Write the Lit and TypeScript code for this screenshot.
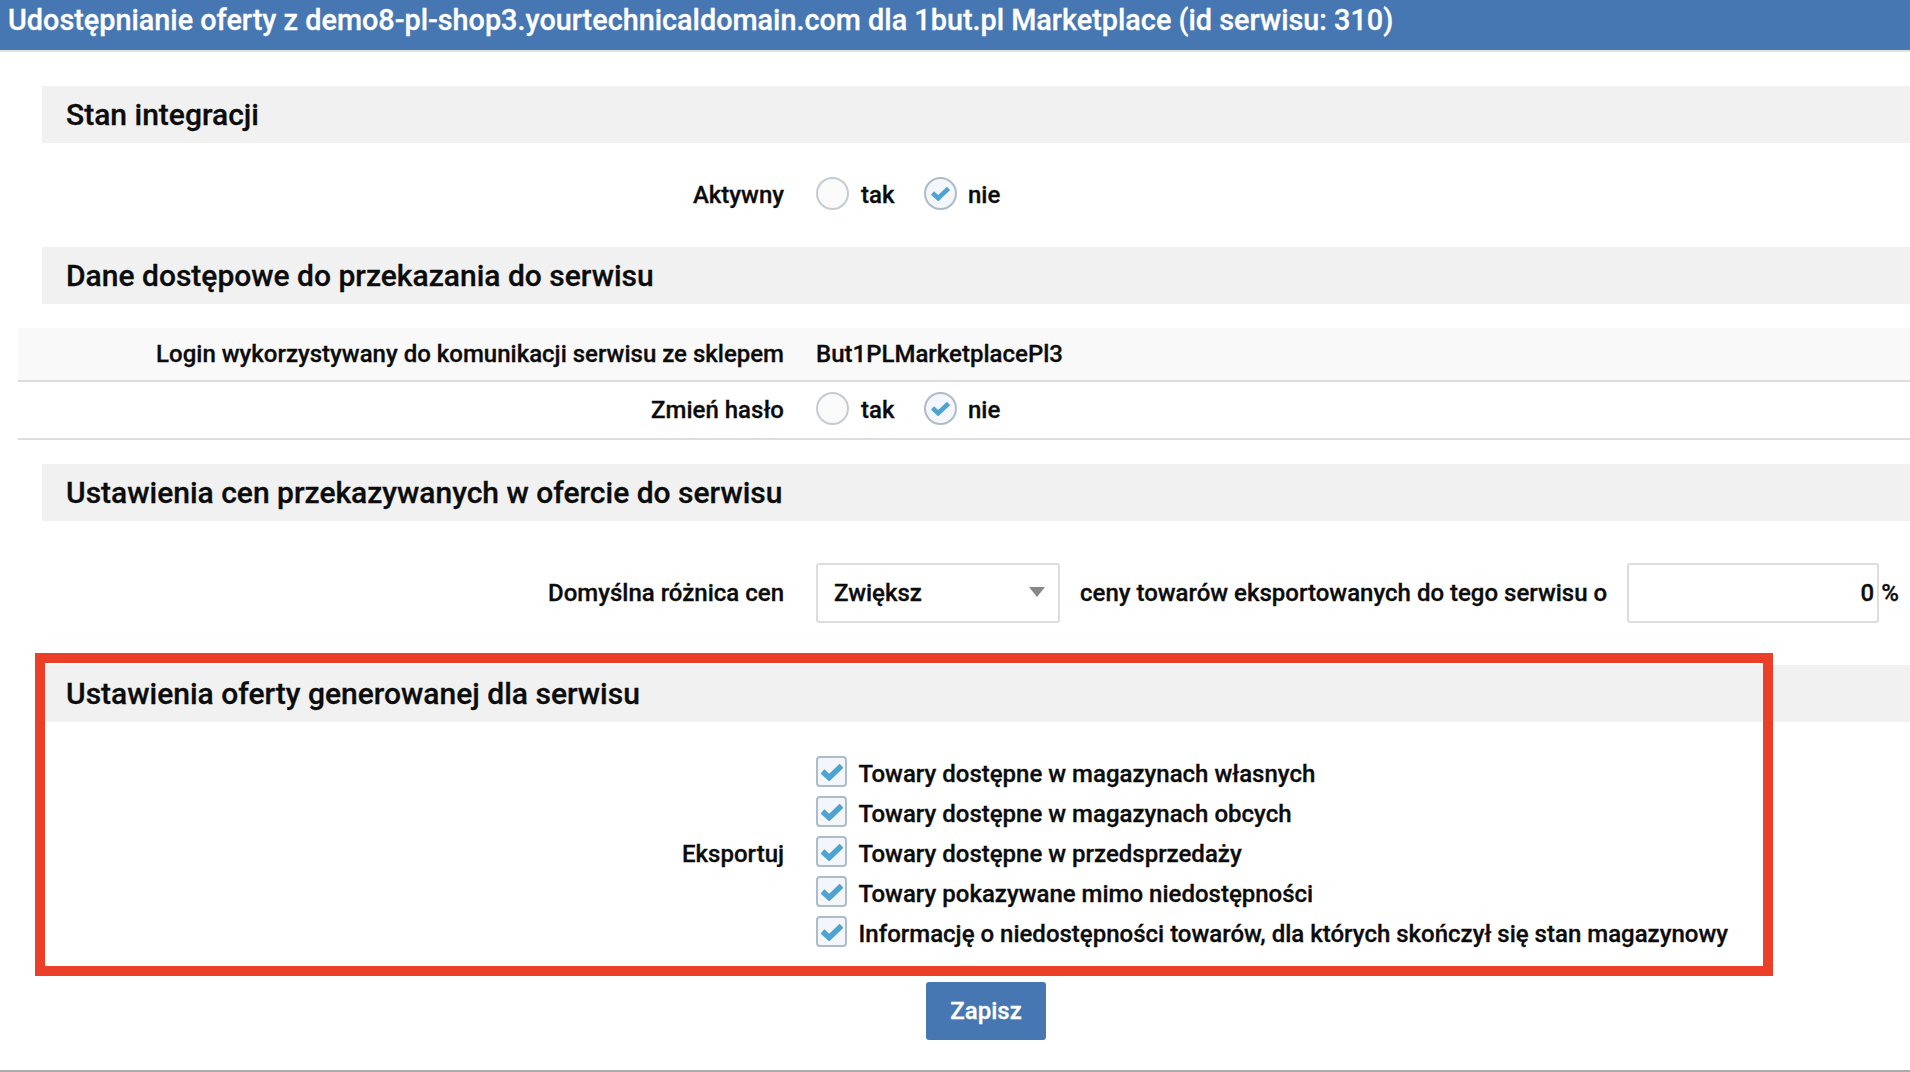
import { LitElement, html, css } from "lit";
import { customElement } from "lit/decorators.js";

const check = html`<svg class="tick" viewBox="0 0 22 18"><path d="M1.4 8.4 L8.2 14.6 L20.6 2.8" fill="none" stroke="#4fa3d1" stroke-width="5.6"/></svg>`;

@customElement("app-root")
export class AppRoot extends LitElement {
  static styles = css`
    :host { display: block; position: relative; height: 1072px; overflow: hidden; background: #fff;
      font-family: Roboto, "Liberation Sans", sans-serif; font-weight: 500; color: #0c0c0c; font-size: 24px;
      -webkit-text-stroke: 0.3px currentColor; }
    .top { height: 50px; background: #4777b2; border-bottom: 2px solid #dfe3df; color: #fff; font-size: 28.8px;
      line-height: 40px; padding-left: 8px; white-space: nowrap; }
    .sec { height: 57px; margin-left: 42px; background: #f1f1f1; padding-left: 24px; font-size: 30px; line-height: 58px; }
    .s1 { margin-top: 34px; }
    .row { display: grid; grid-template-columns: 784px 1fr; column-gap: 32px; align-items: center; }
    .lab { text-align: right; }
    .val { display: flex; align-items: center; }
    .r-top { height: 104px; }
    .table { margin: 24px 0 24px 18px; }
    .table .row { grid-template-columns: 766px 1fr; border-bottom: 2px solid #ddd; }
    .login { height: 52px; background: #f9f9f9; }
    .pass { height: 56px; }
    .price { height: 144px; }
    .radio { box-sizing: border-box; width: 33px; height: 33px; border-radius: 50%; border: 2px solid #c4ccd2; background: #fafafa;
      display: flex; align-items: center; justify-content: center; flex: none; margin-bottom: 3px; }
    .radio.on { border-color: #aebcc8; background: #f3f6fb; }
    .radio .tick { width: 19px; height: 15px; }
    .opt { margin-left: 12px; margin-right: 29px; width: 34px; }
    .radio.on + .opt { margin-left: 11px; }
    .select { box-sizing: border-box; width: 244px; height: 60px; border: 2px solid #ddd; border-radius: 3px; padding: 0 17px 0 16px;
      display: flex; align-items: center; justify-content: space-between; }
    .caret { width: 0; height: 0; border-left: 8.5px solid transparent; border-right: 8.5px solid transparent; border-top: 10px solid #888; margin: -2px -4px 0 0; }
    .mid { margin: 0 20px; white-space: nowrap; }
    input { box-sizing: border-box; width: 252px; height: 60px; border: 2px solid #ddd; border-radius: 3px; text-align: right;
      font: inherit; color: inherit; padding: 0 3px 0 0; background: #fff; outline: none; }
    .pct { margin-left: 2px; }
    .exp { height: 260px; align-items: center; }
    .exp .lab { margin-top: 4px; }
    .checks { display: flex; flex-direction: column; gap: 10px; align-self: start; padding-top: 35px; }
    .chk { display: flex; align-items: center; height: 30px; white-space: nowrap; }
    .chk span:last-child { margin-top: 4px; }
    .box { box-sizing: border-box; width: 31px; height: 31px; border: 2px solid #aebcc8; border-radius: 4px; background: #f3f6fb;
      display: flex; align-items: center; justify-content: center; margin-right: 11.5px; flex: none; margin-top: -1px; }
    .box .tick { width: 22px; height: 18px; }
    .btn { width: 120px; height: 58px; border-radius: 3px; background: #4777b2; color: #fff; font-size: 24px; display: flex; align-items: center; justify-content: center; }
    .actions { display: flex; padding-left: 926px; height: 88px; }
    .end { height: 2px; background: #aaa; }
    .mark { position: absolute; left: 35px; top: 653px; width: 1738px; height: 323px; box-sizing: border-box; border: 10px solid #eb4027; pointer-events: none; }
  `;

  private yesNo() {
    return html`<span class="radio"></span><span class="opt">tak</span><span class="radio on">${check}</span><span class="opt">nie</span>`;
  }

  render() {
    const items = [
      "Towary dostępne w magazynach własnych",
      "Towary dostępne w magazynach obcych",
      "Towary dostępne w przedsprzedaży",
      "Towary pokazywane mimo niedostępności",
      "Informację o niedostępności towarów, dla których skończył się stan magazynowy",
    ];
    return html`
      <div class="top">Udostępnianie oferty z demo8-pl-shop3.yourtechnicaldomain.com dla 1but.pl Marketplace (id serwisu: 310)</div>
      <div class="sec s1">Stan integracji</div>
      <div class="row r-top"><div class="lab">Aktywny</div><div class="val">${this.yesNo()}</div></div>
      <div class="sec">Dane dostępowe do przekazania do serwisu</div>
      <div class="table">
        <div class="row login"><div class="lab">Login wykorzystywany do komunikacji serwisu ze sklepem</div><div class="val">But1PLMarketplacePl3</div></div>
        <div class="row pass"><div class="lab">Zmień hasło</div><div class="val">${this.yesNo()}</div></div>
      </div>
      <div class="sec">Ustawienia cen przekazywanych w ofercie do serwisu</div>
      <div class="row price">
        <div class="lab">Domyślna różnica cen</div>
        <div class="val">
          <div class="select"><span>Zwiększ</span><span class="caret"></span></div>
          <span class="mid">ceny towarów eksportowanych do tego serwisu o</span>
          <input value="0" /><span class="pct">%</span>
        </div>
      </div>
      <div class="sec">Ustawienia oferty generowanej dla serwisu</div>
      <div class="row exp">
        <div class="lab">Eksportuj</div>
        <div class="checks">
          ${items.map((t) => html`<div class="chk"><span class="box">${check}</span><span>${t}</span></div>`)}
        </div>
      </div>
      <div class="actions"><div class="btn">Zapisz</div></div>
      <div class="end"></div>
      <div class="mark"></div>
    `;
  }
}
